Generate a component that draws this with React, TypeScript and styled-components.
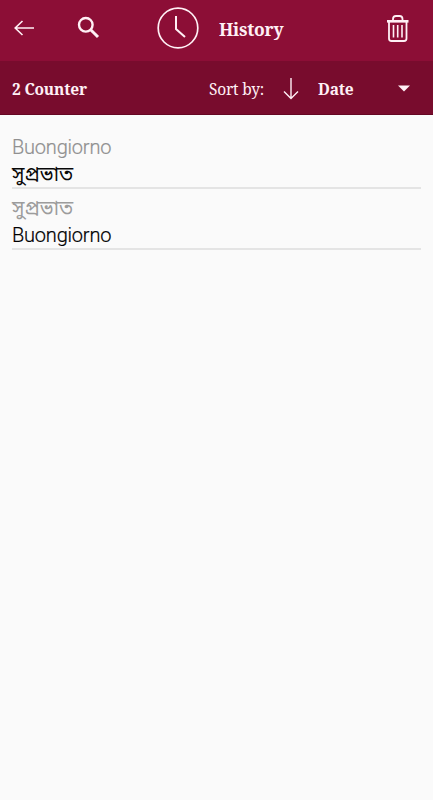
import React from "react";
import styled, { createGlobalStyle } from "styled-components";

const GlobalStyle = createGlobalStyle`
  * { box-sizing: border-box; }
  body { margin: 0; background: #fafafa; }
`;

const Screen = styled.main`
  display: flex;
  flex-direction: column;
  width: 433px;
  height: 800px;
  overflow: hidden;
  background: #fafafa;
`;

const serif = `"Noto Serif", "Droid Serif", "DejaVu Serif Condensed", "DejaVu Serif", serif`;

const AppBar = styled.header`
  display: flex;
  align-items: center;
  height: 61px;
  padding: 0 23px 5px 12px;
  background: #8c0e36;
  color: #fff0f5;
`;

const IconButton = styled.button<{ $gap?: number }>`
  display: flex;
  flex: none;
  padding: 0;
  margin: 0 ${(p) => p.$gap ?? 0}px 0 0;
  border: 0;
  background: none;
  color: inherit;
`;

const Title = styled.h1`
  margin: 0 auto 0 0;
  padding-top: 1px;
  font: 700 17.5px/24px ${serif};
  letter-spacing: -0.25px;
`;

const SortBar = styled.section`
  display: flex;
  align-items: center;
  height: 54px;
  padding: 1px 22px 0 12px;
  background: #780c2d;
  border-bottom: 1px solid #650723;
  color: #fff0f5;
`;

const BarText = styled.span<{ $bold?: boolean; $width: number }>`
  flex: none;
  width: ${(p) => p.$width}px;
  padding-top: 1px;
  white-space: nowrap;
  font: ${(p) => (p.$bold ? 700 : 400)} 15.5px/22px ${serif};
  letter-spacing: -0.2px;
`;

const List = styled.ul`
  margin: 0;
  padding: 13px 12px 0;
  list-style: none;
`;

const Entry = styled.li`
  height: 61px;
  padding-top: 6px;
  border-bottom: 2px solid #e4e4e4;
  font-family: Roboto, "Noto Sans Bengali", "Noto Sans", sans-serif;
`;

const Line = styled.div<{ $muted?: boolean }>`
  height: 27px;
  font-size: 20px;
  line-height: 27px;
  white-space: nowrap;
  color: ${(p) => (p.$muted ? "#9c9c9c" : "#080808")};

  &:lang(it) {
    font-weight: 300;
    letter-spacing: -0.2px;
    color: ${(p) => (p.$muted ? "#909090" : "#000")};
    -webkit-text-stroke: 0.2px currentColor;
  }
`;

const entries = [
  { source: "Buongiorno", from: "it", target: "সুপ্রভাত" },
  { source: "সুপ্রভাত", target: "Buongiorno", to: "it" },
];

export default function App() {
  return (
    <Screen>
      <GlobalStyle />
      <AppBar>
        <IconButton $gap={41} aria-label="Back">
          <svg width="24" height="24" viewBox="0 0 24 24" fill="none" stroke="currentColor" strokeWidth="1.6">
            <path d="M22 12H3M10.5 5L3.2 12L10.5 19" />
          </svg>
        </IconButton>
        <IconButton $gap={56} aria-label="Search">
          <svg width="24" height="24" viewBox="0 0 24 24" fill="none" stroke="currentColor">
            <circle cx="8.8" cy="8.8" r="6.8" strokeWidth="2.4" />
            <path d="M13.7 13.7L21 21" strokeWidth="3" />
          </svg>
        </IconButton>
        <IconButton $gap={20} aria-label="Recent">
          <svg width="42" height="42" viewBox="0 0 42 42" fill="none" stroke="currentColor">
            <circle cx="21" cy="21" r="19.8" strokeWidth="1.7" />
            <path d="M19 9V22L28 30" strokeWidth="2" />
          </svg>
        </IconButton>
        <Title>History</Title>
        <IconButton aria-label="Delete">
          <svg width="25" height="30" viewBox="0 0 25 30" fill="none" stroke="currentColor">
            <path d="M8 7V6Q8 3 11 3H14.5Q17.5 3 17.5 6V7" strokeWidth="1.8" />
            <path d="M2 8.3H23.5" strokeWidth="2.6" />
            <path d="M4 9V25.5Q4 28 6.5 28H19Q21.5 28 21.5 25.5V9" strokeWidth="1.8" />
            <path d="M8.5 12V24.5M12.7 12V24.5M17 12V24.5" strokeWidth="1.6" />
          </svg>
        </IconButton>
      </AppBar>
      <SortBar>
        <BarText $bold $width={197}>2 Counter</BarText>
        <BarText $width={73}>Sort by:</BarText>
        <IconButton $gap={18} aria-label="Sort direction">
          <svg width="18" height="24" viewBox="0 0 18 24" fill="none" stroke="currentColor" strokeWidth="1.4">
            <path d="M9 2V22.5M2 15.5L9 22.5L16 15.5" />
          </svg>
        </IconButton>
        <BarText $bold $width={79}>Date</BarText>
        <IconButton aria-label="Choose sort">
          <svg width="14" height="8" viewBox="0 0 14 8" fill="currentColor">
            <path d="M1 1.5H13L7 7.5Z" />
          </svg>
        </IconButton>
      </SortBar>
      <List>
        {entries.map((e) => (
          <Entry key={e.source}>
            <Line $muted lang={e.from}>{e.source}</Line>
            <Line lang={e.to}>{e.target}</Line>
          </Entry>
        ))}
      </List>
    </Screen>
  );
}
